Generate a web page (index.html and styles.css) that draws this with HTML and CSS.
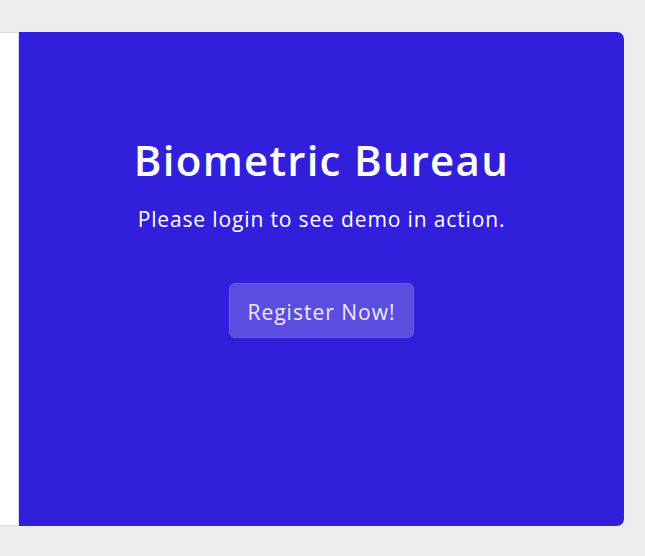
FILE: index.html
```html
<!DOCTYPE html>
<html lang="en">
<head>
<meta charset="utf-8">
<title>Biometric Bureau</title>
<link rel="stylesheet" href="styles.css">
</head>
<body>
<div class="app">
  <div class="card-group">
    <div class="card card-login"></div>
    <div class="card card-promo">
      <h1 class="title">Biometric Bureau</h1>
      <p class="lead">Please login to see demo in action.</p>
      <button class="btn-register" type="button">Register Now!</button>
    </div>
  </div>
</div>
</body>
</html>
```
FILE: styles.css
```css
html, body {
  margin: 0;
  padding: 0;
}
body {
  background: #ebedef;
  font-family: "Open Sans", "Noto Sans", sans-serif;
  height: 556px;
  overflow: hidden;
}
.app {
  padding: 32px 21px 0 0;
}
.card-group {
  display: flex;
  height: 494px;
}
.card-login {
  width: 18px;
  background: #ffffff;
  border-top: 1px solid #d8dbe0;
  border-bottom: 1px solid #d8dbe0;
  border-right: 1px solid #d8dbe0;
}
.card-promo {
  flex: 1;
  background: #321fdb;
  color: #ffffff;
  border-radius: 0 7px 7px 0;
  display: flex;
  flex-direction: column;
  align-items: center;
  padding-top: 103px;
}
.title {
  margin: 0;
  font-size: 42px;
  line-height: 50px;
  font-weight: 600;
  letter-spacing: 1.25px;
}
.lead {
  margin: 19px 0 0;
  font-size: 21px;
  line-height: 30px;
  font-weight: 400;
  letter-spacing: 0.86px;
}
.btn-register {
  margin-top: 49px;
  box-sizing: border-box;
  height: 55px;
  padding: 4px 17px 0;
  background: #5b4de0;
  border: 1px solid #6a5de4;
  border-radius: 6px;
  color: #ece9fc;
  font-family: inherit;
  font-size: 21px;
  line-height: 49px;
  letter-spacing: 1px;
  cursor: pointer;
}
```
